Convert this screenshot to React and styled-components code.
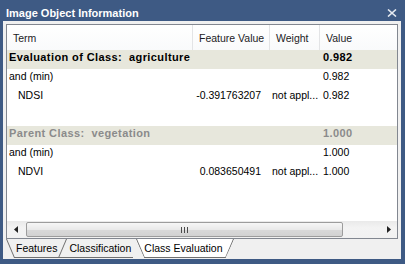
import React from 'react';
import styled, { createGlobalStyle, css } from 'styled-components';

// Columns of the list: Term | Feature Value | Weight | Value
const columns = '186px 77px 50px 1fr';

const rows = [
  { kind: 'class', term: 'Evaluation of Class:  agriculture', value: '0.982' },
  { term: 'and (min)', value: '0.982' },
  { term: 'NDSI', indent: true, feature: '-0.391763207', weight: 'not appl...', value: '0.982' },
  { kind: 'blank' },
  { kind: 'parent', term: 'Parent Class:  vegetation', value: '1.000' },
  { term: 'and (min)', value: '1.000' },
  { term: 'NDVI', indent: true, feature: '0.083650491', weight: 'not appl...', value: '1.000' },
];

const tabs = ['Features', 'Classification', 'Class Evaluation'];
const activeTab = 2;

const GlobalStyle = createGlobalStyle`
  html, body {
    margin: 0;
    padding: 0;
    background: #3e5a84;
  }
  body {
    font-family: "Liberation Sans", Arial, sans-serif;
  }
`;

const Window = styled.div`
  width: 405px;
  height: 264px;
  background: #3e5a84;
  display: flex;
  flex-direction: column;
`;

const TitleBar = styled.div`
  height: 21px;
  box-sizing: border-box;
  padding: 6px 8px 0 6px;
  display: flex;
  justify-content: space-between;
  align-items: flex-start;
  color: #fff;
  font-size: 11px;
  font-weight: bold;
  line-height: 15px;
`;

const Close = styled.svg`
  margin-top: 3px;
`;

const Panel = styled.div`
  height: 238px;
  margin: 0 4px 0 3px;
  box-sizing: border-box;
  padding: 3px 3px 0;
  background: #f0f0f0;
  display: flex;
  flex-direction: column;
`;

const Frame = styled.div`
  height: 215px;
  box-sizing: border-box;
  border: 1px solid #828790;
  background: #fff;
  display: flex;
  flex-direction: column;
`;

const Header = styled.div`
  display: grid;
  grid-template-columns: ${columns};
  height: 25px;
  background: linear-gradient(#ffffff, #f9fafb);
`;

const HeadCell = styled.div`
  padding: 1px 0 0 6px;
  line-height: 24px;
  font-size: 10.5px;
  color: #1b1b24;
  border-right: 1px solid ${p => (p.$last ? 'transparent' : '#e3e4e6')};
  white-space: nowrap;
`;

const Body = styled.div`
  flex: 1;
`;

const Row = styled.div`
  display: grid;
  grid-template-columns: ${columns};
  height: 19px;
  background: ${p => (p.$kind === 'class' || p.$kind === 'parent' ? '#e7e7dc' : '#fff')};
  color: ${p => (p.$kind === 'parent' ? '#8b8b8b' : '#000')};
  ${p =>
    (p.$kind === 'class' || p.$kind === 'parent') &&
    css`
      font-weight: bold;
      font-size: 11px;
      letter-spacing: 0.4px;
    `}
`;

const Cell = styled.div`
  line-height: 15px;
  font-size: inherit;
  padding-left: ${p => p.$pad}px;
  padding-right: ${p => (p.$right ? 9 : 0)}px;
  text-align: ${p => (p.$right ? 'right' : 'left')};
  white-space: pre;
  overflow: hidden;
`;

const RowText = styled.div`
  font-size: 10.5px;
`;

const ScrollBar = styled.div`
  height: 17px;
  display: flex;
  align-items: center;
  background: linear-gradient(#e9e9e9, #f3f3f3 40%, #f1f1f1);
`;

const ArrowButton = styled.div`
  width: 17px;
  height: 17px;
  display: flex;
  align-items: center;
  justify-content: center;
`;

const Thumb = styled.div`
  width: ${p => p.$width}px;
  height: 15px;
  margin-left: 2px;
  box-sizing: border-box;
  border: 1px solid #9c9c9c;
  border-radius: 2px;
  background: linear-gradient(#f6f6f6, #e9e9e9 50%, #d9d9d9 51%, #d2d2d2);
  display: flex;
  align-items: center;
  justify-content: center;
`;

const Track = styled.div`
  flex: 1;
`;

const TabStrip = styled.div`
  height: 20px;
  display: flex;
  align-items: flex-start;
  padding-left: 0;
`;

const edge = '#707070';

const Tab = styled.div`
  position: relative;
  z-index: ${p => p.$z};
  height: 19px;
  box-sizing: border-box;
  margin-left: ${p => (p.$first ? 0 : p.$active ? -5 : -8)}px;
  padding: ${p => (p.$active ? '0 11px 0 8px' : '0 10px')};
  line-height: 18px;
  font-size: 10.5px;
  color: #000;
  white-space: nowrap;
  background-color: ${p => (p.$active ? '#fff' : 'transparent')};
  background-image: linear-gradient(${edge}, ${edge});
  background-repeat: no-repeat;
  background-size: calc(100% - ${p => (p.$leftEdge ? 16 : 8)}px) 1px;
  background-position: ${p => (p.$leftEdge ? 8 : 0)}px 100%;
  ${p =>
    p.$active &&
    css`
      clip-path: polygon(-1px 0, calc(100% + 1px) 0, calc(100% - 8px) 100%, 8px 100%);
    `}

  &::before {
    content: '';
    display: ${p => (p.$leftEdge ? 'block' : 'none')};
    position: absolute;
    left: 0;
    top: 0;
    height: 100%;
    border-left: 1px solid ${edge};
    transform-origin: 0 0;
    transform: skewX(23deg);
  }

  &::after {
    content: '';
    display: ${p => (p.$rightEdge ? 'block' : 'none')};
    position: absolute;
    right: 0;
    top: 0;
    height: 100%;
    border-right: 1px solid ${edge};
    transform-origin: 100% 0;
    transform: skewX(-23deg);
  }
`;

const App = () => (
  <Window>
    <GlobalStyle />
    <TitleBar>
      <span>Image Object Information</span>
      <Close width="10" height="8" viewBox="0 0 10 8">
        <path d="M1 0.5 L9 7.5 M9 0.5 L1 7.5" stroke="#e4e9f0" strokeWidth="1.6" />
      </Close>
    </TitleBar>
    <Panel>
      <Frame>
        <Header>
          <HeadCell>Term</HeadCell>
          <HeadCell>Feature Value</HeadCell>
          <HeadCell>Weight</HeadCell>
          <HeadCell $last>Value</HeadCell>
        </Header>
        <Body>
          {rows.map((row, i) => {
            const bold = row.kind === 'class' || row.kind === 'parent';
            const Wrap = bold ? React.Fragment : RowText;
            return (
              <Row key={i} $kind={row.kind}>
                {row.kind === 'blank' ? null : (
                  <>
                    <Cell $pad={row.indent ? 11 : 2}>
                      <Wrap>{row.term}</Wrap>
                    </Cell>
                    <Cell $right>
                      <Wrap>{row.feature || ''}</Wrap>
                    </Cell>
                    <Cell $pad={2}>
                      <Wrap>{row.weight || ''}</Wrap>
                    </Cell>
                    <Cell $pad={3}>
                      <Wrap>{row.value}</Wrap>
                    </Cell>
                  </>
                )}
              </Row>
            );
          })}
        </Body>
        <ScrollBar>
          <ArrowButton>
            <svg width="4" height="7" viewBox="0 0 4 7">
              <path d="M4 0 L0 3.5 L4 7 Z" fill="#222" />
            </svg>
          </ArrowButton>
          <Thumb $width={317}>
            <svg width="7" height="6" viewBox="0 0 7 6">
              <path d="M0.5 0 V6 M3.5 0 V6 M6.5 0 V6" stroke="#4a4a4a" strokeWidth="1" />
            </svg>
          </Thumb>
          <Track />
          <ArrowButton>
            <svg width="4" height="7" viewBox="0 0 4 7">
              <path d="M0 0 L4 3.5 L0 7 Z" fill="#222" />
            </svg>
          </ArrowButton>
        </ScrollBar>
      </Frame>
      <TabStrip>
        {tabs.map((label, i) => {
          const active = i === activeTab;
          return (
            <Tab
              key={label}
              $first={i === 0}
              $active={active}
              $z={active ? 10 : tabs.length - i}
              $leftEdge={i === 0 || active}
              $rightEdge={active || i + 1 !== activeTab}
            >
              {label}
            </Tab>
          );
        })}
      </TabStrip>
    </Panel>
  </Window>
);

export default App;
